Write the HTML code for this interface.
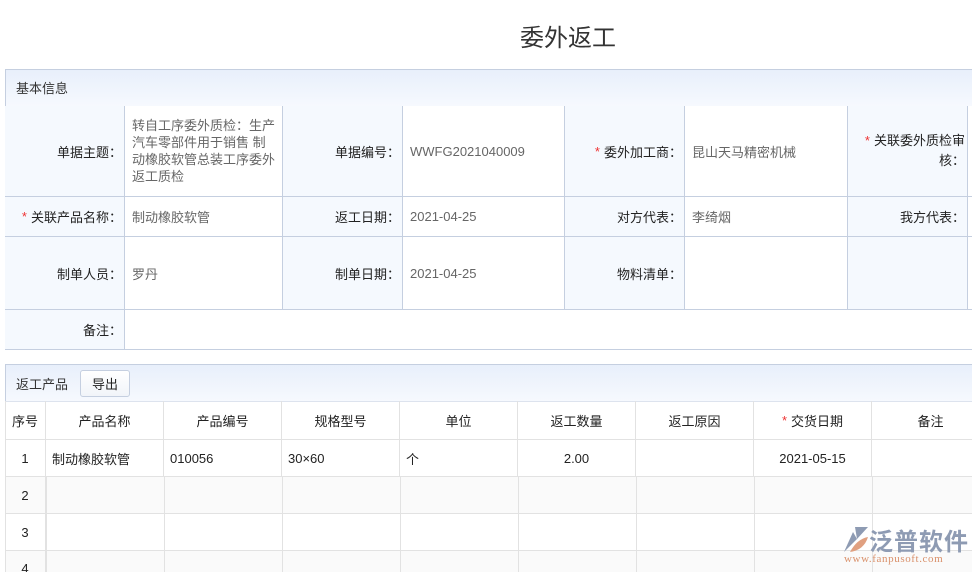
<!DOCTYPE html>
<html><head><meta charset="utf-8"><style>
*{margin:0;padding:0;box-sizing:border-box}
html,body{width:972px;height:572px;overflow:hidden}
body{background:#fff;font-family:"Liberation Sans","Noto Sans CJK SC",sans-serif;font-size:13px;color:#333;position:relative}
.title{position:absolute;left:520px;top:18px;font-size:24px;color:#333;white-space:nowrap}
.abs{position:absolute}
.ph{background:linear-gradient(#e8effb,#f6f9fe);border:1px solid #c5cfe0;}
.c{position:absolute;border-right:1px solid #c5cfe0;border-bottom:1px solid #c5cfe0;display:flex;align-items:center}
.l{background:#f5f9fe;justify-content:flex-end;padding-right:2px;text-align:right;color:#222}
.v{background:#fff;padding-left:7px;color:#666}
.r{color:#e33;margin-right:4px}
.t{position:absolute;border-right:1px solid #e2e2e2;border-bottom:1px solid #e2e2e2;display:flex;align-items:center;justify-content:center;color:#222}
.tl{justify-content:flex-start;padding-left:6px}
</style></head><body>
<div class="title">委外返工</div>

<div class="abs ph" style="left:5px;top:69px;width:975px;height:38px;"></div>
<div class="abs" style="left:16px;top:78px;color:#333">基本信息</div>
<div class="abs" style="left:5px;top:106px;width:1px;height:244px;background:#c5cfe0"></div>

<div class="c l" style="left:5px;top:106px;width:120px;height:91px">单据主题：</div>
<div class="c v" style="left:125px;top:106px;width:158px;height:91px;line-height:17px;padding-right:4px">转自工序委外质检：生产汽车零部件用于销售 制动橡胶软管总装工序委外返工质检</div>
<div class="c l" style="left:283px;top:106px;width:120px;height:91px">单据编号：</div>
<div class="c v" style="left:403px;top:106px;width:162px;height:91px">WWFG2021040009</div>
<div class="c l" style="left:565px;top:106px;width:120px;height:91px"><span class="r">*</span>委外加工商：</div>
<div class="c v" style="left:685px;top:106px;width:163px;height:91px">昆山天马精密机械</div>
<div class="c l" style="left:848px;top:106px;width:120px;height:91px;line-height:20px"><span><span class="r">*</span>关联委外质检审核：</span></div>
<div class="c v" style="left:968px;top:106px;width:20px;height:91px"></div>

<div class="c l" style="left:5px;top:197px;width:120px;height:40px"><span class="r">*</span>关联产品名称：</div>
<div class="c v" style="left:125px;top:197px;width:158px;height:40px">制动橡胶软管</div>
<div class="c l" style="left:283px;top:197px;width:120px;height:40px">返工日期：</div>
<div class="c v" style="left:403px;top:197px;width:162px;height:40px">2021-04-25</div>
<div class="c l" style="left:565px;top:197px;width:120px;height:40px">对方代表：</div>
<div class="c v" style="left:685px;top:197px;width:163px;height:40px">李绮烟</div>
<div class="c l" style="left:848px;top:197px;width:120px;height:40px">我方代表：</div>
<div class="c v" style="left:968px;top:197px;width:20px;height:40px"></div>

<div class="c l" style="left:5px;top:237px;width:120px;height:73px">制单人员：</div>
<div class="c v" style="left:125px;top:237px;width:158px;height:73px">罗丹</div>
<div class="c l" style="left:283px;top:237px;width:120px;height:73px">制单日期：</div>
<div class="c v" style="left:403px;top:237px;width:162px;height:73px">2021-04-25</div>
<div class="c l" style="left:565px;top:237px;width:120px;height:73px">物料清单：</div>
<div class="c v" style="left:685px;top:237px;width:163px;height:73px"></div>
<div class="c l" style="left:848px;top:237px;width:120px;height:73px"></div>
<div class="c v" style="left:968px;top:237px;width:20px;height:73px"></div>

<div class="c l" style="left:5px;top:310px;width:120px;height:40px">备注：</div>
<div class="c v" style="left:125px;top:310px;width:870px;height:40px"></div>

<div class="abs ph" style="left:5px;top:364px;width:975px;height:38px;border-bottom-color:#dde3ee"></div>
<div class="abs" style="left:16px;top:374px;color:#333">返工产品</div>
<div class="abs" style="left:80px;top:370px;width:50px;height:27px;border:1px solid #c5cfe0;border-radius:3px;background:linear-gradient(#fff,#f1f4f9);display:flex;align-items:center;justify-content:center;color:#222">导出</div>

<div style="position:absolute;left:5px;top:477px;width:990px;height:37px;background:#fafafa"></div>
<div style="position:absolute;left:5px;top:551px;width:990px;height:30px;background:#fafafa"></div>
<div class="abs" style="left:5px;top:401px;width:1px;height:180px;background:#e2e2e2"></div>

<div class="t" style="left:5px;top:401px;width:41px;height:39px">序号</div>
<div class="t" style="left:46px;top:401px;width:118px;height:39px">产品名称</div>
<div class="t" style="left:164px;top:401px;width:118px;height:39px">产品编号</div>
<div class="t" style="left:282px;top:401px;width:118px;height:39px">规格型号</div>
<div class="t" style="left:400px;top:401px;width:118px;height:39px">单位</div>
<div class="t" style="left:518px;top:401px;width:118px;height:39px">返工数量</div>
<div class="t" style="left:636px;top:401px;width:118px;height:39px">返工原因</div>
<div class="t" style="left:754px;top:401px;width:118px;height:39px"><span class="r">*</span>交货日期</div>
<div class="t" style="left:872px;top:401px;width:118px;height:39px">备注</div>

<div class="t" style="left:5px;top:440px;width:41px;height:37px">1</div>
<div class="t tl" style="left:46px;top:440px;width:118px;height:37px">制动橡胶软管</div>
<div class="t tl" style="left:164px;top:440px;width:118px;height:37px">010056</div>
<div class="t tl" style="left:282px;top:440px;width:118px;height:37px">30×60</div>
<div class="t tl" style="left:400px;top:440px;width:118px;height:37px">个</div>
<div class="t" style="left:518px;top:440px;width:118px;height:37px">2.00</div>
<div class="t" style="left:636px;top:440px;width:118px;height:37px"></div>
<div class="t" style="left:754px;top:440px;width:118px;height:37px">2021-05-15</div>
<div class="t" style="left:872px;top:440px;width:118px;height:37px"></div>

<div class="t" style="left:5px;top:477px;width:41px;height:37px">2</div>
<div class="t" style="left:5px;top:514px;width:41px;height:37px">3</div>
<div class="t" style="left:5px;top:551px;width:41px;height:37px;align-items:flex-start;padding-top:10px">4</div>
<div class="abs" style="left:46px;top:477px;width:1px;height:100px;background:#e2e2e2"></div>
<div class="abs" style="left:164px;top:477px;width:1px;height:100px;background:#e2e2e2"></div>
<div class="abs" style="left:282px;top:477px;width:1px;height:100px;background:#e2e2e2"></div>
<div class="abs" style="left:400px;top:477px;width:1px;height:100px;background:#e2e2e2"></div>
<div class="abs" style="left:518px;top:477px;width:1px;height:100px;background:#e2e2e2"></div>
<div class="abs" style="left:636px;top:477px;width:1px;height:100px;background:#e2e2e2"></div>
<div class="abs" style="left:754px;top:477px;width:1px;height:100px;background:#e2e2e2"></div>
<div class="abs" style="left:872px;top:477px;width:1px;height:100px;background:#e2e2e2"></div>
<div class="abs" style="left:5px;top:513px;width:990px;height:1px;background:#e2e2e2"></div>
<div class="abs" style="left:5px;top:550px;width:990px;height:1px;background:#e2e2e2"></div>

<svg class="abs" style="left:842px;top:526px" width="30" height="28" viewBox="0 0 30 28">
<path d="M13 1 L26 1 L15 13 Z" fill="#8e9bb3"/>
<path d="M2 26 L11 6 L15 13 Z" fill="#8e9bb3"/>
<path d="M8 26 Q15 13 26 11 Q22 24 8 26 Z" fill="#e0a080"/>
</svg>
<div class="abs" style="left:869px;top:522px;font-size:24px;color:#8e9bb3;font-weight:bold;letter-spacing:1px">泛普软件</div>
<div class="abs" style="left:844px;top:553px;font-size:11px;color:#d9906a;font-family:'Liberation Serif',serif;letter-spacing:0.6px">www.fanpusoft.com</div>
</body></html>
